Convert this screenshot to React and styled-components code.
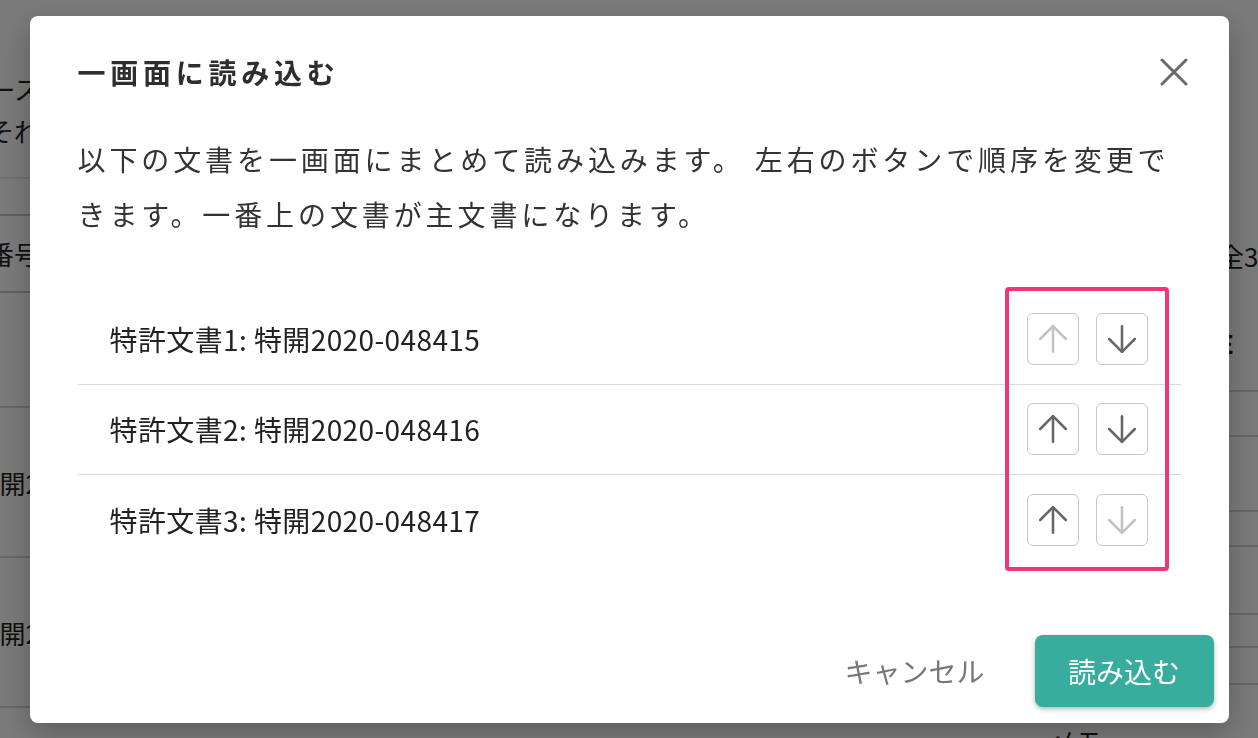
import { styled, createGlobalStyle } from 'styled-components'
import { ArrowUp, ArrowDown } from 'lucide-react'

// global ////////////////////////
const GlobalStyle = createGlobalStyle`
  * { box-sizing: border-box; }
  html, body {
    margin: 0;
    padding: 0;
    background: #fff;
    font-family: "Noto Sans CJK JP", "Noto Sans", sans-serif;
    color: #333;
  }
`

// background page ///////////////
const Page = styled.div`
  width: 1258px;
  height: 738px;
  overflow: hidden;
  display: grid;
  grid-template-columns: 40px 1fr 40px;
  color: #222;
  font-size: 26px;
`

const Column = styled.div`
  display: flex;
  flex-direction: column;
  overflow: hidden;
`

const BgCell = styled.div`
  height: ${(p) => p.$h}px;
  flex-shrink: 0;
  display: flex;
  align-items: center;
  justify-content: ${(p) => (p.$end ? 'flex-end' : 'flex-start')};
  white-space: nowrap;
  font-weight: ${(p) => (p.$bold ? 700 : 400)};
  border-bottom: ${(p) => (p.$line ? `2px solid ${p.$line}` : 'none')};
`

const Memo = styled.div`
  padding: 722px 0 0 1010px;
  white-space: nowrap;
`

const leftCells = [
  { h: 67 },
  { h: 42, t: '検索データベース' },
  { h: 42, t: 'はそれ' },
  { h: 28, line: '#e8e8e8' },
  { h: 37, line: '#c8c8c8' },
  { h: 77, t: '番号', line: '#c8c8c8' },
  { h: 115, line: '#d6d6d6' },
  { h: 150, t: '特開2', line: '#d6d6d6' },
  { h: 150, t: '特開2', line: '#d6d6d6' },
]

const rightCells = [
  { h: 215 },
  { h: 80, t: '全3件' },
  { h: 97, t: 'E', bold: true, line: '#d6d6d6' },
  { h: 45, line: '#d6d6d6' },
  { h: 75, line: '#d6d6d6' },
  { h: 35, line: '#d6d6d6' },
  { h: 68, line: '#d6d6d6' },
  { h: 33, line: '#d6d6d6' },
  { h: 37, line: '#d6d6d6' },
]

// dialog ////////////////////////
const Overlay = styled.div`
  position: fixed;
  inset: 0;
  background: rgba(0, 0, 0, 0.52);
  display: flex;
  align-items: center;
  justify-content: center;
`

const Dialog = styled.div`
  width: 1199px;
  background: #fff;
  border-radius: 8px;
  box-shadow: 0 10px 30px rgba(0, 0, 0, 0.25);
  display: flex;
  flex-direction: column;
`

const Body = styled.div`
  padding: 36px 48px 0;
`

const Header = styled.div`
  display: flex;
  align-items: center;
  justify-content: space-between;
  height: 40px;
`

const Title = styled.h2`
  margin: 0;
  font-size: 28px;
  line-height: 40px;
  font-weight: 700;
  letter-spacing: 0.17em;
  color: #2e2e2e;
`

const CloseBtn = styled.button`
  width: 40px;
  height: 40px;
  margin-right: -13px;
  padding: 0;
  border: none;
  background: none;
  display: flex;
  align-items: center;
  justify-content: center;
  cursor: pointer;
`

const Description = styled.p`
  margin: 40px 0 0;
  font-size: 28px;
  line-height: 55px;
  letter-spacing: 3.9px;
  color: #333;
`

const List = styled.div`
  position: relative;
  margin-top: 53px;
`

const Row = styled.div`
  height: 90px;
  display: flex;
  align-items: center;
  justify-content: space-between;
  padding: 0 33px 0 32px;
  border-bottom: ${(p) => (p.$last ? 'none' : '1.5px solid #dadada')};
`

const DocName = styled.span`
  font-size: 28px;
  letter-spacing: 0.4px;
  color: #222;
`

const Actions = styled.div`
  display: flex;
  gap: 17px;
`

const MoveBtn = styled.button`
  width: 52px;
  height: 52px;
  padding: 0;
  border: 1.5px solid #c6c6c6;
  border-radius: 6px;
  background: #fff;
  display: flex;
  align-items: center;
  justify-content: center;
  color: ${(p) => (p.disabled ? '#c2c2c2' : '#666')};
  cursor: ${(p) => (p.disabled ? 'default' : 'pointer')};
`

// annotation frame drawn over the buttons
const Highlight = styled.div`
  position: absolute;
  left: 927px;
  top: -8px;
  width: 164px;
  height: 284px;
  border: 4px solid #f2357a;
  border-radius: 4px;
  pointer-events: none;
`

const Footer = styled.div`
  margin-top: 70px;
  padding: 0 15px 16px;
  display: flex;
  justify-content: flex-end;
  align-items: center;
  gap: 26px;
`

const CancelBtn = styled.button`
  border: none;
  background: none;
  padding: 0 24px;
  font-family: inherit;
  font-size: 28px;
  color: #777;
  cursor: pointer;
`

const PrimaryBtn = styled.button`
  width: 179px;
  height: 72px;
  border: none;
  border-radius: 8px;
  background: #38ad9e;
  color: #fff;
  font-family: inherit;
  font-size: 28px;
  box-shadow: 0 2px 5px rgba(0, 0, 0, 0.3);
  cursor: pointer;
`

const docs = [
  { id: 1, name: '特許文書1: 特開2020-048415' },
  { id: 2, name: '特許文書2: 特開2020-048416' },
  { id: 3, name: '特許文書3: 特開2020-048417' },
]

function CloseIcon() {
  return (
    <svg width="28" height="28" viewBox="0 0 28 28">
      <path
        d="M2 2 L26 26 M26 2 L2 26"
        stroke="#6a6a6a"
        strokeWidth="3"
        strokeLinecap="round"
      />
    </svg>
  )
}

function App() {
  return (
    <>
      <GlobalStyle />
      <Page>
        <Column>
          {leftCells.map((c, i) => (
            <BgCell key={i} $h={c.h} $line={c.line} $end>
              {c.t}
            </BgCell>
          ))}
        </Column>
        <Memo>メモ</Memo>
        <Column>
          {rightCells.map((c, i) => (
            <BgCell key={i} $h={c.h} $line={c.line} $bold={c.bold}>
              {c.t}
            </BgCell>
          ))}
        </Column>
      </Page>

      <Overlay>
        <Dialog>
          <Body>
            <Header>
              <Title>一画面に読み込む</Title>
              <CloseBtn aria-label="閉じる">
                <CloseIcon />
              </CloseBtn>
            </Header>
            <Description>
              以下の文書を一画面にまとめて読み込みます。 左右のボタンで順序を変更できます。一番上の文書が主文書になります。
            </Description>
            <List>
              {docs.map((d, i) => (
                <Row key={d.id} $last={i === docs.length - 1}>
                  <DocName>{d.name}</DocName>
                  <Actions>
                    <MoveBtn disabled={i === 0}>
                      <ArrowUp size={44} strokeWidth={1.4} />
                    </MoveBtn>
                    <MoveBtn disabled={i === docs.length - 1}>
                      <ArrowDown size={44} strokeWidth={1.4} />
                    </MoveBtn>
                  </Actions>
                </Row>
              ))}
              <Highlight />
            </List>
          </Body>
          <Footer>
            <CancelBtn>キャンセル</CancelBtn>
            <PrimaryBtn>読み込む</PrimaryBtn>
          </Footer>
        </Dialog>
      </Overlay>
    </>
  )
}

export default App
